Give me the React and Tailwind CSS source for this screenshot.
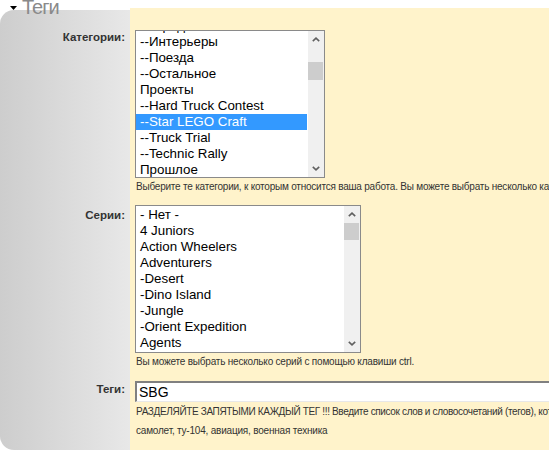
import React from "react";

function Chevron({ down }) {
  return (
    <svg width="8" height="5" viewBox="0 0 8 5" className="block">
      {down ? (
        <path d="M0.8 0.8 L4 3.8 L7.2 0.8" fill="none" stroke="#606060" strokeWidth="1.6" />
      ) : (
        <path d="M0.8 4.2 L4 1.2 L7.2 4.2" fill="none" stroke="#606060" strokeWidth="1.6" />
      )}
    </svg>
  );
}

function ScrollBar({ thumbTop, thumbHeight }) {
  return (
    <div className="w-[16px] bg-[#f0f0f0] flex flex-col">
      <div className="h-[17px] flex items-center justify-center">
        <Chevron />
      </div>
      <div className="flex-1">
        <div className="w-[15px] bg-[#cdcdcd]" style={{ marginTop: thumbTop, height: thumbHeight }} />
      </div>
      <div className="h-[17px] flex items-center justify-center">
        <Chevron down />
      </div>
    </div>
  );
}

function ListBox({ width, items, selected, offset, thumbTop, thumbHeight }) {
  return (
    <div className="h-[148px] border border-[#8a8a8a] bg-white flex" style={{ width }}>
      <div className="flex-1 overflow-hidden">
        <div style={{ marginTop: offset }}>
          {items.map((it, i) => (
            <div
              key={i}
              className={
                "h-[16px] leading-[16px] pl-[4px] mr-[1px] text-[13.33px] whitespace-nowrap " +
                (i === selected ? "bg-[#3399ff] text-white" : "text-black")
              }
            >
              {it}
            </div>
          ))}
        </div>
      </div>
      <ScrollBar thumbTop={thumbTop} thumbHeight={thumbHeight} />
    </div>
  );
}

const cats = [
  "--Города",
  "--Интерьеры",
  "--Поезда",
  "--Остальное",
  "Проекты",
  "--Hard Truck Contest",
  "--Star LEGO Craft",
  "--Truck Trial",
  "--Technic Rally",
  "Прошлое",
];

const series = [
  "- Нет -",
  "4 Juniors",
  "Action Wheelers",
  "Adventurers",
  "-Desert",
  "-Dino Island",
  "-Jungle",
  "-Orient Expedition",
  "Agents",
];

export default function App() {
  return (
    <div className="w-[549px] h-[451px] overflow-hidden bg-white relative font-['Liberation_Sans',Arial,sans-serif]">
      <div className="absolute left-[10px] top-[-3px] flex items-center gap-[5px] z-10">
        <svg width="7" height="4" viewBox="0 0 7 4" className="block mt-[2px]">
          <path d="M0 0 L7 0 L3.5 4 Z" fill="#000" />
        </svg>
        <span className="text-[20px] leading-[20px] tracking-[-1px] text-[#8a8a8a]">Теги</span>
      </div>
      <div className="mt-[8px] grid grid-cols-[130px_1fr]">
        <div className="col-start-1 row-start-1 row-span-3 mt-[2px] rounded-l-[14px] bg-gradient-to-r from-[#cdcdcd] to-[#e8e8e8]" />

        <div className="col-start-1 row-start-1 text-right pr-[5px] pt-[22px] font-bold text-[11.5px] leading-[14px] text-[#333]">
          Категории:
        </div>
        <div className="col-start-2 row-start-1 bg-[#fff3cb] pl-[5px] pt-[22px] pb-[11px]">
          <ListBox width={190} items={cats} selected={6} offset={-13} thumbTop={14} thumbHeight={18} />
          <div className="mt-[2px] pl-[1px] text-[10px] tracking-[-0.22px] leading-[14px] text-[#333] whitespace-nowrap">
            Выберите те категории, к которым относится ваша работа. Вы можете выбрать несколько категорий с помощью клавиши ctrl.
          </div>
        </div>

        <div className="col-start-1 row-start-2 text-right pr-[5px] pt-[3px] font-bold text-[11.5px] leading-[14px] text-[#333]">
          Серии:
        </div>
        <div className="col-start-2 row-start-2 bg-[#fff3cb] pl-[5px] pb-[12px]">
          <ListBox width={226} items={series} selected={-1} offset={1} thumbTop={0} thumbHeight={17} />
          <div className="mt-[2px] pl-[1px] text-[10px] tracking-[-0.2px] leading-[14px] text-[#333] whitespace-nowrap">
            Вы можете выбрать несколько серий с помощью клавиши ctrl.
          </div>
        </div>

        <div className="col-start-1 row-start-3 text-right pr-[5px] pt-[1px] font-bold text-[11.5px] leading-[14px] text-[#333]">
          Теги:
        </div>
        <div className="col-start-2 row-start-3 bg-[#fff3cb] pl-[5px] pb-[10px]">
          <div className="w-[520px] h-[21px] bg-white border-t-2 border-l-2 border-b border-[#808080] border-b-[#e8e8e8] pl-[2px] text-[14px] leading-[18px] text-black">
            SBG
          </div>
          <div className="pl-[1px] text-[10px] tracking-[-0.35px] leading-[19px] text-[#333] whitespace-nowrap">
            РАЗДЕЛЯЙТЕ ЗАПЯТЫМИ КАЖДЫЙ ТЕГ !!! Введите список слов и словосочетаний (тегов), которые характеризуют вашу работу. Например:
          </div>
          <div className="pl-[1px] text-[10px] tracking-[-0.2px] leading-[19px] text-[#333] whitespace-nowrap">
            самолет, ту-104, авиация, военная техника
          </div>
        </div>
      </div>
    </div>
  );
}
